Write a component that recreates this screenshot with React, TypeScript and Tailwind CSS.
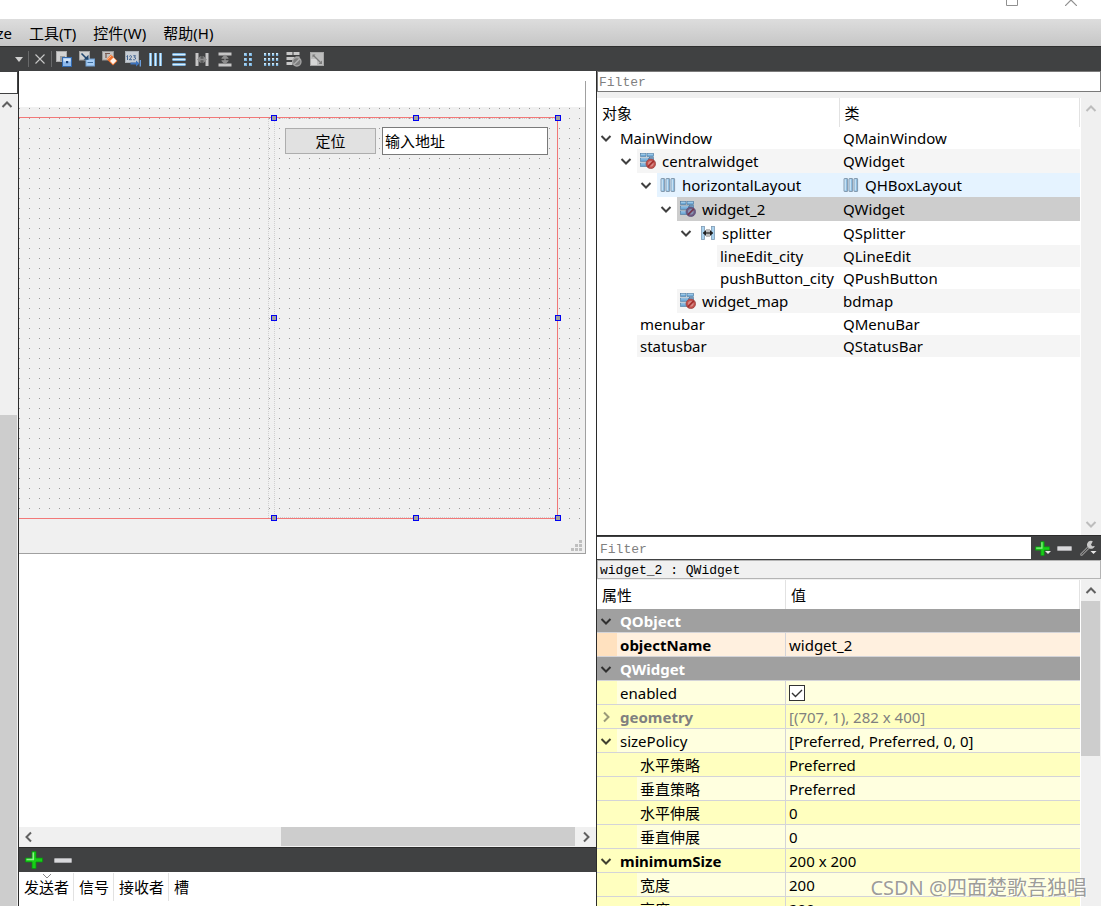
import React from "react";

const SANS = "font-['Noto_Sans','Noto_Sans_CJK_SC',sans-serif]";
const MONO = "font-['Liberation_Mono','Noto_Sans_CJK_SC',monospace]";

function Chevron({ dir, className = "text-[#404040]" }: { dir: "up" | "down" | "left" | "right"; className?: string }) {
  const d = {
    up: "M1.5 8 6 3.5 10.5 8",
    down: "M1.5 4 6 8.5 10.5 4",
    left: "M8 1.5 3.5 6 8 10.5",
    right: "M4 1.5 8.5 6 4 10.5",
  }[dir];
  return (
    <svg viewBox="0 0 12 12" className={`h-3 w-3 shrink-0 ${className}`} fill="none" stroke="currentColor" strokeWidth="2">
      <path d={d} />
    </svg>
  );
}

function WidgetIcon({ selected = false }: { selected?: boolean }) {
  return (
    <svg viewBox="0 0 16 16" className="h-4 w-4 shrink-0">
      <g fill="#6fa9d6" stroke="#47749c" strokeWidth=".6">
        <rect x=".5" y=".5" width="5.5" height="3" />
        <rect x="7" y=".5" width="6.5" height="3" />
        <rect x=".5" y="5" width="8.5" height="3.4" />
        <rect x="9.5" y="4.6" width="4" height="3" />
        <rect x=".5" y="10" width="6.5" height="3.4" />
      </g>
      <path d="M1 1.3h4.5M7.5 1.3h5.5M1 5.8h7M1 10.8h5" stroke="#b5d9f2" strokeWidth=".8" />
      <circle cx="10.8" cy="10.8" r="4.8" fill={selected ? "#6f5a80" : "#c4504c"} stroke={selected ? "#56527c" : "#94433f"} strokeWidth=".7" />
      <circle cx="10.8" cy="10.8" r="2.8" fill={selected ? "#8895b5" : "#d78b87"} />
      <path d="m7.8 13.8 6-6" stroke={selected ? "#74384f" : "#a32e2c"} strokeWidth="1.8" />
    </svg>
  );
}

function HBoxIcon() {
  return (
    <svg viewBox="0 0 16 16" className="h-4 w-4 shrink-0">
      {[1, 6, 11].map((x) => (
        <g key={x}>
          <rect x={x} y="1.5" width="3.6" height="13" rx=".5" fill="#8fbde0" stroke="#7f93a6" strokeWidth=".9" />
          <path d={`M${x + 1.2} 2.2v11.4`} stroke="#d8ecfa" strokeWidth="1.1" />
        </g>
      ))}
    </svg>
  );
}

function SplitterIcon() {
  return (
    <svg viewBox="0 0 16 16" className="h-4 w-4 shrink-0">
      <rect x="1.5" y="1.5" width="3" height="13" fill="#a9d2ef" stroke="#7d9ab2" strokeWidth=".8" />
      <rect x="11.5" y="1.5" width="3" height="13" fill="#a9d2ef" stroke="#7d9ab2" strokeWidth=".8" />
      <path d="M7 4v8M9 4v8" stroke="#555" strokeWidth=".8" />
      <path d="M3.500 8h9" stroke="#222" strokeWidth="1.200" />
      <path d="M6 5 2.800 8 6 11zM10 5l3.200 3L10 11z" fill="#222" />
    </svg>
  );
}

function PlusIcon({ className }: { className: string }) {
  return (
    <svg viewBox="0 0 18 18" className={`shrink-0 ${className}`}>
      <path d="M7 .5h4V7h6.500v4H11v6.500H7V11H.5V7H7z" fill="#17cf17" stroke="#0b8f12" strokeWidth=".8" />
      <path d="M8.300 1.500v7H1.500" fill="none" stroke="#8df08a" strokeWidth="1.500" />
    </svg>
  );
}

function MinusIcon({ className }: { className: string }) {
  return <span className={`block h-[5px] rounded-[1px] border border-[#a9a9ac] bg-[#d9d9dc] ${className}`} />;
}

const toolIcons: { label: string; art: React.ReactNode }[] = [
  {
    label: "编辑控件",
    art: (
      <>
        <rect x=".5" y=".5" width="10" height="10" fill="#d2d2d2" stroke="#ababab" />
        <rect x="4" y="5" width="5" height="5" fill="#9c9c9c" />
        <rect x="6.500" y="6.500" width="9" height="9" fill="#8db9ec" stroke="#3269ae" />
        <path d="M7.500 7.500h7v3h-7z" fill="#cfe3fa" />
        <rect x="10" y="10" width="2.200" height="2.200" fill="#173f78" />
      </>
    ),
  },
  {
    label: "编辑信号/槽",
    art: (
      <>
        <rect x=".5" y=".5" width="10" height="8.500" fill="#d2d2d2" stroke="#a5a5a5" />
        <rect x="7" y="8" width="8.500" height="7" fill="#a7cdf4" stroke="#719fd0" />
        <path d="M8.500 11.500h5.500" stroke="#3d6d9f" />
        <path d="m2.500 2.500 5 5" stroke="#22476f" strokeWidth="1.600" />
        <path d="M9.500 3.800v5H4.500z" fill="#22476f" />
      </>
    ),
  },
  {
    label: "编辑伙伴",
    art: (
      <>
        <rect x=".5" y=".5" width="11" height="8.500" fill="#c4c4c4" stroke="#989898" />
        <path d="M3 2.500h5M4 2.500V7" stroke="#775b52" strokeWidth="1.200" />
        <path d="m4.500 8 4.500-4.500 6.500 6.500-4.500 4.500z" fill="#f0722e" />
        <path d="m8 10 3.500-3.500 3 3.300-3.500 3.400z" fill="#fff3ea" />
        <path d="m5 8.500 4.500-4" stroke="#ffc29f" />
      </>
    ),
  },
  {
    label: "编辑 Tab 顺序",
    art: (
      <>
        <rect x=".5" y=".5" width="13" height="11" fill="#c7cdd4" stroke="#aab0b6" />
        <path d="M1.500 5.500 2.500 4.500V9M4.300 5.500q1.200-1.700 2.200-.3.300 1-2.200 3.500h2.600M8.300 4.700h2.200L9.300 6.300q1.800 0 1.200 1.700-.7 1.100-2.300.7" fill="none" stroke="#34598a" strokeWidth=".9" />
        <path d="M5.500 11.500H11V9.500l3.500 3-3.500 3v-2H5.500z" fill="#3e73bc" />
        <path d="M15.300 9v6.500" stroke="#6fa4e4" strokeWidth="1.300" />
      </>
    ),
  },
  {
    label: "水平布局",
    art: [1.5, 6.5, 11.5].map((x) => (
      <g key={x}>
        <path d={`M${x + 1} 2v13`} stroke="#6fa9d8" strokeWidth="3" />
        <path d={`M${x + 1} 2v13`} stroke="#d7effd" strokeWidth="1.300" />
      </g>
    )),
  },
  {
    label: "垂直布局",
    art: [3.5, 8.5, 13.5].map((y) => (
      <g key={y}>
        <path d={`M1.500 ${y}h13`} stroke="#6fa9d8" strokeWidth="3" />
        <path d={`M1.500 ${y}h13`} stroke="#d7effd" strokeWidth="1.300" />
      </g>
    )),
  },
  {
    label: "使用分裂器水平布局",
    art: (
      <>
        <path d="M3 2v13M13 2v13" stroke="#c6c6c6" strokeWidth="3" />
        <path d="M7 5v7M9 5v7" stroke="#8e8e8e" strokeWidth=".8" />
        <path d="M4 8.500h8" stroke="#8e8e8e" strokeWidth="1.400" />
        <path d="M6.500 5 3 8.500 6.500 12zM9.500 5 13 8.500 9.500 12z" fill="#8e8e8e" />
      </>
    ),
  },
  {
    label: "使用分裂器垂直布局",
    art: (
      <>
        <path d="M1.500 3h13M1.500 14h13" stroke="#c6c6c6" strokeWidth="3" />
        <path d="M4.500 7.500h7M4.500 9.500h7" stroke="#8e8e8e" strokeWidth=".8" />
        <path d="M8 4.500v8" stroke="#8e8e8e" strokeWidth="1.400" />
        <path d="M4.500 7 8 3.500 11.500 7zM4.500 10 8 13.500l3.500-3.500z" fill="#8e8e8e" />
      </>
    ),
  },
  {
    label: "在窗体布局中布局",
    art: [2, 7, 12].map((y) => (
      <g key={y}>
        <rect x="4" y={y} width="3" height="3" fill="#79b2de" />
        <rect x="9" y={y} width="3" height="3" fill="#79b2de" />
        <path d={`M4 ${y + 1}h2M9 ${y + 1}h2`} stroke="#d7effd" />
      </g>
    )),
  },
  {
    label: "栅格布局",
    art: [2, 7, 12].map((y) => (
      <g key={y}>
        {[1, 5, 9, 13].map((x) => (
          <g key={x}>
            <rect x={x} y={y} width="2.200" height="3" fill="#79b2de" />
            <rect x={x} y={y} width="1.800" height="1.500" fill="#d7effd" />
          </g>
        ))}
      </g>
    )),
  },
  {
    label: "打破布局",
    art: (
      <>
        <path d="M.5 1h6v3h-6zM7.500 1h6v3h-6zM.5 6h8v3h-8zM.5 11h6v3h-6zM9.500 5.500h4v2h-4z" fill="#c9c9c9" />
        <circle cx="10.800" cy="10.800" r="4.200" fill="#7c7c7c" stroke="#a6a6a6" strokeWidth="1.300" />
        <path d="m8 13.600 5.600-5.600" stroke="#b0b0b0" strokeWidth="1.400" />
      </>
    ),
  },
  {
    label: "调整大小",
    art: (
      <>
        <rect x="1.500" y="1.500" width="13" height="13" fill="#bdbdbd" stroke="#a6a6a6" />
        <rect x="2" y="8" width="6" height="6" fill="#d6d6d6" />
        <path d="m4.500 4.500 7 7" stroke="#7c7c7c" strokeWidth="1.200" />
        <path d="M3.500 3.500v3l3-3zM13 13v-3.500L9.500 13z" fill="#7c7c7c" />
      </>
    ),
  },
];

type TreeRow = { level: number; open?: boolean; icon?: "widget" | "hbox" | "splitter"; name: string; cls: string; clsIcon?: boolean; tone: string };

const treeRows: TreeRow[] = [
  { level: 0, open: true, name: "MainWindow", cls: "QMainWindow", tone: "bg-white" },
  { level: 1, open: true, icon: "widget", name: "centralwidget", cls: "QWidget", tone: "bg-[#f5f5f5]" },
  { level: 2, open: true, icon: "hbox", name: "horizontalLayout", cls: "QHBoxLayout", clsIcon: true, tone: "bg-[#e5f3ff]" },
  { level: 3, open: true, icon: "widget", name: "widget_2", cls: "QWidget", tone: "bg-[#cdcdcd]" },
  { level: 4, open: true, icon: "splitter", name: "splitter", cls: "QSplitter", tone: "bg-white" },
  { level: 5, name: "lineEdit_city", cls: "QLineEdit", tone: "bg-[#f5f5f5]" },
  { level: 5, name: "pushButton_city", cls: "QPushButton", tone: "bg-white" },
  { level: 3, icon: "widget", name: "widget_map", cls: "bdmap", tone: "bg-[#f5f5f5]" },
  { level: 1, name: "menubar", cls: "QMenuBar", tone: "bg-white" },
  { level: 1, name: "statusbar", cls: "QStatusBar", tone: "bg-[#f5f5f5]" },
];

const treeIndent = ["pl-0", "pl-5", "pl-10", "pl-[60px]", "pl-20", "pl-[100px]"];

function TreeLine({ row }: { row: TreeRow }) {
  return (
    <tr className={row.icon ? "h-6" : "h-[22px]"}>
      <td className={`p-0 ${treeIndent[row.level]}`}>
        <div className="flex items-center">
          <span className="flex w-5 shrink-0 pl-[3px]">{row.open && <Chevron dir="down" />}</span>
          <span className={`flex flex-1 items-center gap-1.5 whitespace-nowrap pl-[3px] ${row.icon ? "h-6" : "h-[22px]"} ${row.tone}`}>
            {row.icon === "widget" && <WidgetIcon selected={row.name === "widget_2"} />}
            {row.icon === "hbox" && <HBoxIcon />}
            {row.icon === "splitter" && <SplitterIcon />}
            {row.name}
          </span>
        </div>
      </td>
      <td className={`p-0 ${row.tone}`}>
        <div className="flex items-center gap-1.5 pl-1">
          {row.clsIcon && <HBoxIcon />}
          {row.cls}
        </div>
      </td>
    </tr>
  );
}

type PropRow = { name: string; value?: string; check?: boolean; arrow?: "down" | "right"; child?: boolean; bold?: boolean; muted?: boolean; tone: "light" | "dark" | "orange" };

const groups: { title: string; rows: PropRow[] }[] = [
  { title: "QObject", rows: [{ name: "objectName", value: "widget_2", bold: true, tone: "orange" }] },
  {
    title: "QWidget",
    rows: [
      { name: "enabled", check: true, tone: "light" },
      { name: "geometry", value: "[(707, 1), 282 x 400]", arrow: "right", bold: true, muted: true, tone: "dark" },
      { name: "sizePolicy", value: "[Preferred, Preferred, 0, 0]", arrow: "down", tone: "light" },
      { name: "水平策略", value: "Preferred", child: true, tone: "dark" },
      { name: "垂直策略", value: "Preferred", child: true, tone: "light" },
      { name: "水平伸展", value: "0", child: true, tone: "dark" },
      { name: "垂直伸展", value: "0", child: true, tone: "light" },
      { name: "minimumSize", value: "200 x 200", arrow: "down", bold: true, tone: "dark" },
      { name: "宽度", value: "200", child: true, tone: "light" },
      { name: "高度", value: "200", child: true, tone: "dark" },
    ],
  },
];

const tones = { light: "bg-[#ffffdf]", dark: "bg-[#ffffbf]", orange: "bg-[#fff0df]" };

function PropLine({ row }: { row: PropRow }) {
  const gutter = row.tone === "orange" ? "bg-[#ffe1bf]" : "bg-[#ffffbf]";
  return (
    <tr className="h-6">
      <td className="border-b border-r border-[#d4d4d8] p-0">
        <div className="flex h-[23px] items-center">
          <span className={`flex h-full shrink-0 items-center pl-[3px] ${row.child ? "w-10" : "w-5"} ${gutter}`}>
            {row.arrow && <Chevron dir={row.arrow} className={row.muted ? "text-[#9a9a78]" : "text-[#404030]"} />}
          </span>
          <span className={`flex h-full flex-1 items-center whitespace-nowrap pl-[3px] ${tones[row.tone]} ${row.bold ? "font-bold" : ""} ${row.muted ? "text-[#808080]" : ""}`}>
            {row.name}
          </span>
        </div>
      </td>
      <td className={`whitespace-nowrap border-b border-[#d4d4d8] p-0 pl-[3px] ${tones[row.tone]} ${row.muted ? "text-[#808080]" : ""}`}>
        {row.check ? (
          <span className="relative block h-4 w-4">
            <input type="checkbox" defaultChecked aria-label={row.name} className="peer block h-4 w-4 appearance-none border border-[#333] bg-white" />
            <svg viewBox="0 0 16 16" className="pointer-events-none absolute inset-0 hidden h-4 w-4 peer-checked:block" fill="none" stroke="#333" strokeWidth="1.400">
              <path d="m3 8 3.500 3.500L13 5" />
            </svg>
          </span>
        ) : (
          row.value
        )}
      </td>
    </tr>
  );
}

const handles = [
  "left-0 top-0",
  "left-1/2 top-0",
  "left-full top-0",
  "left-0 top-1/2",
  "left-full top-1/2",
  "left-0 top-full",
  "left-1/2 top-full",
  "left-full top-full",
];

function FormCanvas() {
  return (
    <div className="mr-2.5 mt-2.5 border-b border-r border-[#a0a0a0]">
      <div className="h-[26px] bg-white" />
      <div className="bg-[#f0f0f0]">
        <div className="bg-[radial-gradient(circle_at_0.5px_0.5px,#9a9a9a_0.6px,transparent_0.7px)] bg-[length:10px_10px] bg-[position:0_1px] pt-2.5">
          <div className="mr-[27px] flex h-[402px] justify-end border-y border-r border-[#f27878]">
            <div className="w-[7px] border-x border-dotted border-[#cfcfcf]" />
            <div className="relative w-[282px] border-y border-dotted border-[#cfcfcf]">
              <div className="flex items-center gap-1.5 pl-2.5 pr-[9px] pt-2">
                <button className="h-[26px] w-[91px] border border-[#adadad] bg-[#e1e1e1] pb-0.5 font-['Noto_Sans_CJK_SC',sans-serif] leading-none">定位</button>
                <input aria-label="地址" defaultValue="输入地址" className="h-7 min-w-0 flex-1 border border-[#7a7a7a] bg-white px-0.5 pb-0.5 font-['Noto_Sans_CJK_SC',sans-serif] outline-none" />
              </div>
              <div className="pointer-events-none absolute -inset-px">
                {handles.map((pos) => (
                  <span key={pos} className={`absolute h-1.5 w-1.5 -translate-x-1/2 -translate-y-1/2 border border-[#0000f0] bg-[#a0a0a0] ${pos}`} />
                ))}
              </div>
            </div>
          </div>
        </div>
        <div className="flex h-[34px] items-end justify-end pb-0.5 pr-[3px]">
          <svg viewBox="0 0 11 11" className="h-[11px] w-[11px]" fill="#bfbfbf">
            <path d="M8 0h3v3H8zM4 4h3v3H4zM8 4h3v3H8zM0 8h3v3H0zM4 8h3v3H4zM8 8h3v3H8z" />
          </svg>
        </div>
      </div>
    </div>
  );
}

function Separator() {
  return <span className="h-4 w-px bg-[#68696a]" />;
}

export default function App() {
  return (
    <div className={`relative flex h-screen flex-col overflow-hidden bg-white text-[15px] leading-5 text-black ${SANS}`}>
      <header className="flex h-[19px] shrink-0 items-start justify-end pr-6">
        <button aria-label="最大化" className="mr-[47px] block">
          <svg viewBox="0 0 12 6" className="block h-1.5 w-3" fill="none" stroke="#909090">
            <path d="M.5 0v5.500h11V0" />
          </svg>
        </button>
        <button aria-label="关闭" className="block">
          <svg viewBox="0 0 12 6" className="block h-1.5 w-3" fill="none" stroke="#909090" strokeWidth="1.200">
            <path d="M0 6 6 0l6 6" />
          </svg>
        </button>
      </header>

      <nav className="flex h-[27px] shrink-0 items-center gap-[17px] bg-linear-to-b from-[#dddddd] to-[#c6c6c6]">
        <button className="flex w-3 justify-end">ze</button>
        <button>工具(T)</button>
        <button>控件(W)</button>
        <button>帮助(H)</button>
      </nav>

      <div className="flex h-[25px] shrink-0 items-center border-t border-[#2e2e2e] bg-[#404142]">
        <button aria-label="更多" className="ml-[15px] mr-[5px]">
          <svg viewBox="0 0 8 5" className="block h-[5px] w-2" fill="#d0d0d0">
            <path d="M0 0h8L4 5z" />
          </svg>
        </button>
        <Separator />
        <button aria-label="关闭文件" className="mx-[5px]">
          <svg viewBox="0 0 12 12" className="block h-3 w-3" stroke="#c8c8c8" strokeWidth="1.100">
            <path d="m1.500 1.500 9 9M10.500 1.500l-9 9" />
          </svg>
        </button>
        <Separator />
        <div className="ml-1 flex gap-[7px]">
          {toolIcons.map((t) => (
            <button key={t.label} aria-label={t.label}>
              <svg viewBox="0 0 16 16" className="block h-4 w-4">
                {t.art}
              </svg>
            </button>
          ))}
        </div>
      </div>

      <div className="flex min-h-0 flex-1">
        <aside className="flex w-[19px] shrink-0 flex-col border-r border-[#2b2b2b] bg-[#f0f0f0]">
          <input aria-label="过滤控件" className="h-[23px] w-full border-y border-r border-[#404142] bg-white outline-none" />
          <button aria-label="向上滚动" className="flex h-[22px] shrink-0 items-center justify-center pr-1">
            <Chevron dir="up" className="text-[#606060]" />
          </button>
          <div className="flex-[299]" />
          <div className="mr-px flex-[491] bg-[#cdcdcd]" />
        </aside>

        <main className="flex min-w-0 flex-1 flex-col">
          <FormCanvas />
          <div className="flex-1" />
          <div className="flex h-5 shrink-0 items-center bg-[#f0f0f0]">
            <button aria-label="向左滚动" className="flex w-5 justify-center">
              <Chevron dir="left" className="text-[#606060]" />
            </button>
            <div className="flex-[242]" />
            <div className="h-[19px] flex-[294] self-start bg-[#cdcdcd]" />
            <button aria-label="向右滚动" className="flex w-[21px] justify-center">
              <Chevron dir="right" className="text-[#606060]" />
            </button>
          </div>
          <div className="flex h-[25px] shrink-0 items-center gap-[11px] border-t border-[#2b2b2b] bg-[#404142] pl-1.5">
            <button aria-label="添加连接">
              <PlusIcon className="block h-[18px] w-[18px]" />
            </button>
            <button aria-label="删除连接">
              <MinusIcon className="w-[18px]" />
            </button>
          </div>
          <table className="relative h-[34px] w-full shrink-0 table-fixed border-collapse">
            <colgroup>
              <col className="w-[55px]" />
              <col className="w-10" />
              <col className="w-[55px]" />
              <col />
            </colgroup>
            <thead>
              <tr>
                {["发送者", "信号", "接收者", "槽"].map((h, i) => (
                  <th key={h} className="relative p-0 pb-[5px] align-bottom text-left font-normal">
                    {i === 0 && (
                      <svg viewBox="0 0 10 5" className="absolute left-[23px] top-0.5 h-[5px] w-2.5" fill="none" stroke="#888">
                        <path d="M1 0 5 4 9 0" />
                      </svg>
                    )}
                    <span className={`block whitespace-nowrap pl-[5px] leading-7 ${i < 3 ? "border-r border-[#e2e2e2]" : ""}`}>{h}</span>
                  </th>
                ))}
              </tr>
            </thead>
          </table>
        </main>

        <aside className="flex w-[505px] shrink-0 flex-col border-l border-[#2b2b2b]">
          <section className="flex h-[464px] shrink-0 flex-col bg-[#f0f0f0]">
            <input aria-label="过滤对象" placeholder="Filter" className={`mb-1.5 h-[21px] w-full shrink-0 border border-[#7a7a7a] bg-white px-px pt-0.5 text-[13px] outline-none placeholder:text-[#808080] ${MONO}`} />
            <div className="flex min-h-0 flex-1">
              <div className="flex-1 overflow-hidden border-r border-white bg-white">
                <table className="w-full table-fixed border-collapse">
                  <colgroup>
                    <col className="w-[242px]" />
                    <col />
                  </colgroup>
                  <thead>
                    <tr className="h-[29px]">
                      <th className="border-r border-[#e2e2e2] p-0 pl-[5px] text-left font-normal">对象</th>
                      <th className="border-r border-[#e2e2e2] p-0 pl-[5px] text-left font-normal">类</th>
                    </tr>
                  </thead>
                  <tbody>
                    {treeRows.map((r) => (
                      <TreeLine key={r.name} row={r} />
                    ))}
                  </tbody>
                </table>
              </div>
              <div className="flex w-5 flex-col items-center justify-between py-[5px]">
                <button aria-label="对象列表向上">
                  <Chevron dir="up" className="text-[#bdbdbd]" />
                </button>
                <button aria-label="对象列表向下">
                  <Chevron dir="down" className="text-[#bdbdbd]" />
                </button>
              </div>
            </div>
          </section>

          <section className="flex min-h-0 flex-1 flex-col">
            <div className="flex h-[25px] shrink-0 items-center border-t border-[#2b2b2b] bg-[#404142]">
              <input aria-label="过滤属性" placeholder="Filter" className={`h-[22px] min-w-0 flex-1 bg-white px-[3px] pt-0.5 text-[13px] outline-none placeholder:text-[#808080] ${MONO}`} />
              <button aria-label="添加属性" className="relative ml-1 mr-[7px]">
                <PlusIcon className="block h-[15px] w-[15px]" />
                <svg viewBox="0 0 6 3" className="absolute -right-px bottom-0.5 h-[3px] w-1.5" fill="#e8e8e8">
                  <path d="M0 0h6L3 3z" />
                </svg>
              </button>
              <button aria-label="删除属性">
                <MinusIcon className="w-[15px]" />
              </button>
              <button aria-label="配置" className="ml-[7px] mr-1">
                <svg viewBox="0 0 18 17" className="block h-[17px] w-[18px]" fill="none">
                  <path d="M2.500 14.500 10 7" stroke="#8c8c8c" strokeWidth="3" strokeLinecap="round" />
                  <path d="M2.500 14.500 10 7" stroke="#4a4a4a" strokeWidth="1" />
                  <path d="M13.800 1.200a4 4 0 1 0 2 4.800l-2.600.2-1.200-1.400z" fill="#c9c9c9" />
                  <path d="M11.500 11h6l-3 3z" fill="#e8e8e8" />
                </svg>
              </button>
            </div>
            <div className={`h-[19px] shrink-0 whitespace-pre border border-[#b4b4b4] bg-[#f0f0f0] px-0.5 text-[13px] leading-5 ${MONO}`}>widget_2 : QWidget</div>
            <div className="flex min-h-0 flex-1 bg-[#f0f0f0] pt-px">
              <div className="flex-1 overflow-hidden border-r border-white bg-white">
                <table className="w-full table-fixed border-separate border-spacing-0">
                  <colgroup>
                    <col className="w-[189px]" />
                    <col />
                  </colgroup>
                  <thead>
                    <tr className="h-[29px]">
                      <th className="border-r border-[#e2e2e2] p-0 pl-[5px] text-left font-normal">属性</th>
                      <th className="border-r border-[#e2e2e2] p-0 pl-[5px] text-left font-normal">值</th>
                    </tr>
                  </thead>
                  {groups.map((g) => (
                    <tbody key={g.title}>
                      <tr className="h-6">
                        <th colSpan={2} className="border-b border-[#d4d4d8] bg-[#a0a0a0] p-0 text-left font-bold text-white">
                          <span className="flex items-center gap-2 pl-[3px]">
                            <Chevron dir="down" className="text-[#303030]" />
                            {g.title}
                          </span>
                        </th>
                      </tr>
                      {g.rows.map((r) => (
                        <PropLine key={r.name} row={r} />
                      ))}
                    </tbody>
                  ))}
                </table>
              </div>
              <div className="flex w-5 flex-col">
                <button aria-label="属性列表向上" className="flex h-[21px] shrink-0 items-center justify-center">
                  <Chevron dir="up" className="text-[#606060]" />
                </button>
                <div className="mr-px flex-[155] bg-[#cdcdcd]" />
                <div className="flex-[150]" />
              </div>
            </div>
          </section>
        </aside>
      </div>

      <div className="pointer-events-none absolute bottom-1 right-3.5 whitespace-nowrap text-[20px] leading-7 text-[#8f8f8f]/90 [text-shadow:1px_1px_0_#ffffffb0]">CSDN @四面楚歌吾独唱</div>
    </div>
  );
}
